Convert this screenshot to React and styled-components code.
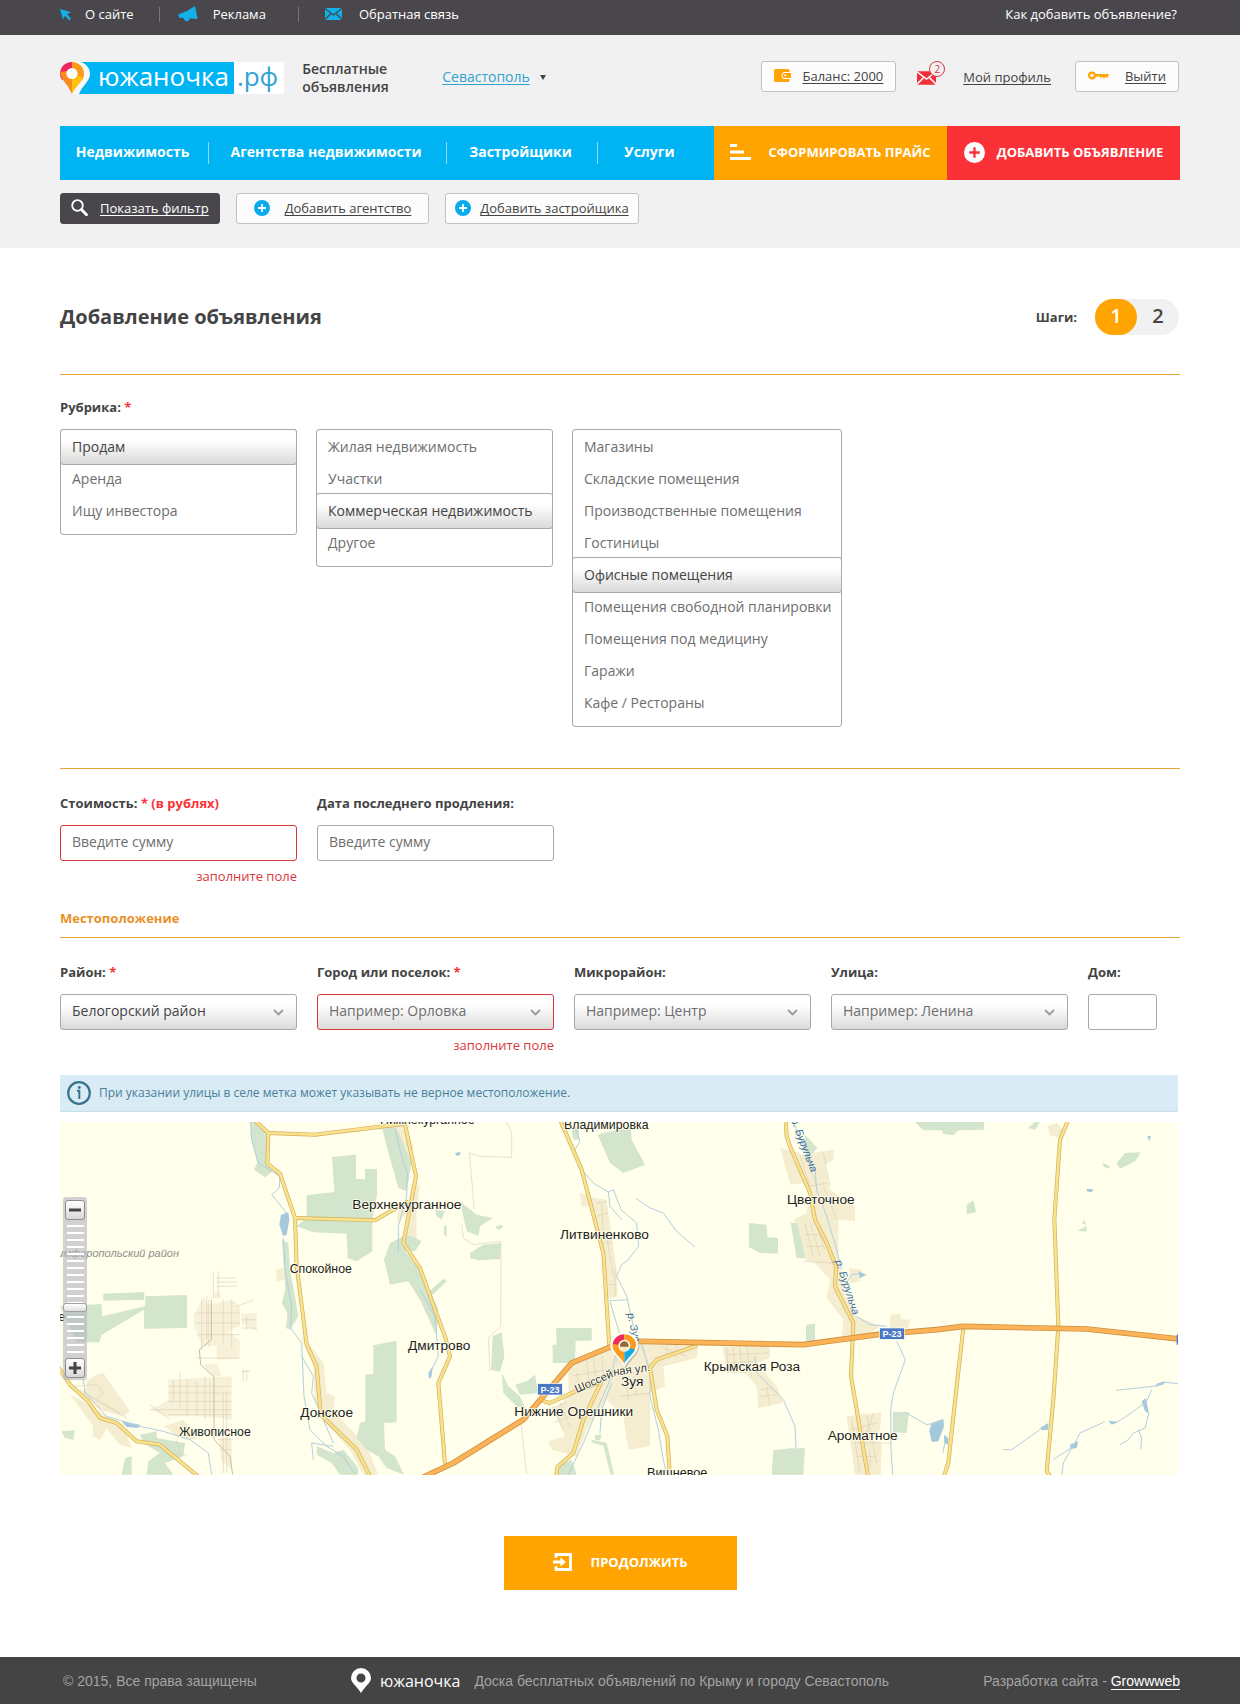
import React, { useState } from "react";
import styled, { createGlobalStyle, css } from "styled-components";

const color = {
  dark: "#4a474c",
  text: "#444444",
  muted: "#6e6e6e",
  blue: "#00b4f3",
  link: "#2fa3d2",
  orange: "#ffa400",
  red: "#fa3237",
  error: "#d9363e",
  rule: "#e3a534",
  border: "#a9a9a9",
  page: "#f1f1f1",
};

const GlobalStyle = createGlobalStyle`
  *, *::before, *::after { box-sizing: border-box; }
  body {
    margin: 0;
    background: #fff;
    color: ${color.text};
    font-family: "Open Sans", "Noto Sans", sans-serif;
    font-size: 13px;
    line-height: 20px;
  }
  button, input, select { font: inherit; color: inherit; }
  a { color: inherit; text-decoration: none; }
  svg { display: block; flex: none; }
`;

/* ---------- shared ---------- */

const Container = styled.div`
  max-width: 1120px;
  margin: 0 auto;
`;

const Gutter = styled.div`
  padding: 0 60px;
  background: ${(p) => p.$bg || "transparent"};
`;

const Underlined = styled.span`
  text-decoration: underline;
  text-decoration-thickness: 1px;
  text-decoration-skip-ink: none;
  text-underline-offset: 2px;
`;

/* ---------- top bar ---------- */

const TopRow = styled(Container)`
  display: flex;
  justify-content: space-between;
  padding: 4px 3px 11px 0;
  color: #fff;
`;

const TopLinks = styled.nav`
  display: flex;
  align-items: center;
`;

const TopLink = styled.a`
  display: flex;
  align-items: center;
  gap: ${(p) => p.$gap}px;
  padding: ${(p) => p.$pad};
  & + & {
    background: linear-gradient(#77757a, #77757a) left center / 1px 15px no-repeat;
  }
`;

/* ---------- header ---------- */

const HeaderRow = styled(Container)`
  display: flex;
  align-items: center;
  padding: 25px 1px 30px 0;
`;

const Logo = styled.a`
  display: flex;
  height: 32px;
  font-size: 26px;
  line-height: 28px;
`;

const LogoName = styled.span`
  padding: 0 5px 0 6px;
  background: ${color.blue};
  color: #fff;
`;

const LogoZone = styled.span`
  padding: 0 6px 0 3px;
  background: #fff;
  color: ${color.link};
`;

const Tagline = styled.p`
  margin: 0 0 0 18px;
  width: 140px;
  font-weight: 600;
  font-size: 14px;
  line-height: 18px;
`;

const CityButton = styled.button`
  display: flex;
  align-items: center;
  gap: 10px;
  padding: 0 0 2px;
  border: 0;
  background: none;
  color: ${color.link};
  font-size: 14px;
  cursor: pointer;
`;

const Caret = styled.span`
  border: 3px solid transparent;
  border-top: 5px solid ${color.text};
  border-bottom: 0;
`;

const Account = styled.div`
  display: flex;
  align-items: center;
  align-self: flex-start;
  margin: 1px 0 0 auto;
`;

const OutlineButton = styled.button`
  display: flex;
  align-items: center;
  gap: ${(p) => p.$gap || 12}px;
  height: 31px;
  padding: 0 ${(p) => p.$pad || 12}px 2px;
  border: 1px solid ${(p) => (p.$dark ? color.dark : "#c2c2c2")};
  border-radius: 3px;
  background: ${(p) => (p.$dark ? color.dark : "#fcfcfc")};
  color: ${(p) => (p.$dark ? "#fff" : color.text)};
  cursor: pointer;
`;

const MailLink = styled.a`
  position: relative;
  margin: 0 18px 0 21px;
  padding: 3px 9px 0 0;
`;

const MailBadge = styled.span`
  position: absolute;
  top: -7px;
  right: 0;
  width: 16px;
  height: 16px;
  border: 1px solid ${color.error};
  border-radius: 8px;
  background: ${color.page};
  color: ${color.error};
  font-size: 10px;
  line-height: 14px;
  text-align: center;
`;

const ProfileLink = styled.a`
  margin-right: 24px;
`;

const MainNav = styled(Container)`
  display: grid;
  grid-template-columns: 654fr 233fr 233fr;
`;

const NavLinks = styled.nav`
  display: grid;
  grid-template-columns: 148fr 238fr 151fr 107fr;
  align-items: center;
  height: 54px;
  padding-right: 10px;
  background: ${color.blue};
  color: #fff;
  font-size: 14px;
  font-weight: 700;
  text-align: center;
`;

const NavLink = styled.a`
  padding: 0 3px 2px 0;
  & + & {
    border-left: 1px solid #8fdcf8;
  }
`;

const SolidButton = styled.button`
  display: flex;
  align-items: center;
  justify-content: center;
  gap: ${(p) => p.$gap || 16}px;
  height: 54px;
  min-width: 233px;
  padding: 0 0 2px;
  border: 0;
  background: ${(p) => p.$bg};
  color: #fff;
  font-weight: 700;
  text-transform: uppercase;
  cursor: pointer;
`;

const QuickActions = styled(Container)`
  display: flex;
  gap: 16px;
  padding: 13px 0 24px;
`;

/* ---------- form ---------- */

const TitleRow = styled.div`
  display: flex;
  align-items: center;
  justify-content: space-between;
  padding: 51px 1px 39px 0;
`;

const Title = styled.h1`
  margin: 0;
  font-size: 20px;
  line-height: 36px;
  font-weight: 700;
`;

const Steps = styled.div`
  display: flex;
  align-items: center;
  gap: 18px;
  font-weight: 700;
`;

const StepPills = styled.ol`
  display: flex;
  margin: 0;
  padding: 0;
  list-style: none;
  border-radius: 18px;
  background: ${color.page};
`;

const Step = styled.li`
  width: 42px;
  height: 36px;
  border-radius: 18px;
  font-size: 20px;
  line-height: 34px;
  font-weight: 600;
  text-align: center;
  ${(p) =>
    p.$active &&
    css`
      background: ${color.orange};
      color: #fff;
    `}
`;

const Rule = styled.hr`
  margin: 0;
  border: 0;
  border-top: 1px solid ${color.rule};
`;

const Caption = styled.div`
  margin-bottom: 12px;
  font-weight: 700;
`;

const Required = styled.span`
  color: ${color.red};
`;

const RubricSection = styled.section`
  padding: 22px 0 41px;
`;

const RubricColumns = styled.div`
  display: grid;
  grid-template-columns: minmax(0, 237px) minmax(0, 237px) minmax(0, 270px);
  align-items: start;
  gap: 19px;
`;

const OptionBox = styled.fieldset`
  min-width: 0;
  margin: 0;
  padding: 1px 0 7px;
  border: 1px solid ${color.border};
  border-radius: 3px;
`;

const HiddenRadio = styled.input`
  position: absolute;
  width: 1px;
  height: 1px;
  margin: 0;
  opacity: 0;
`;

const OptionLabel = styled.label`
  display: block;
  position: relative;
  height: 32px;
  padding: 0 11px;
  font-size: 14px;
  line-height: 32px;
  white-space: nowrap;
  color: ${color.muted};
  cursor: pointer;
  &:has(input:checked) {
    height: 36px;
    margin: -2px -1px;
    border: 1px solid ${color.border};
    border-radius: 3px;
    background: linear-gradient(#fff 30%, #dadada);
    line-height: 34px;
    color: ${color.text};
  }
`;

const FieldGrid = styled.div`
  display: grid;
  grid-template-columns: repeat(4, minmax(0, 237px)) minmax(0, 69px);
  align-items: start;
  gap: 20px;
  padding-top: 24px;
`;

const FieldLabel = styled.label`
  display: block;
  margin-bottom: 12px;
  font-weight: 700;
`;

const controlStyle = css`
  display: block;
  width: 100%;
  height: 36px;
  padding: 0 11px 2px;
  border: 1px solid ${(p) => (p.$invalid ? color.error : color.border)};
  border-radius: 3px;
  font-size: 14px;
  outline: none;
`;

const TextInput = styled.input`
  ${controlStyle}
  padding-bottom: 4px;
  background: #fff;
  &::placeholder {
    color: ${color.muted};
    opacity: 1;
  }
`;

const SelectWrap = styled.div`
  position: relative;
  svg {
    position: absolute;
    top: 15px;
    right: 13px;
    pointer-events: none;
  }
`;

const Select = styled.select`
  ${controlStyle}
  appearance: none;
  background: linear-gradient(#fff 30%, #dadada);
  color: ${(p) => (p.$empty ? color.muted : color.text)};
`;

const ErrorText = styled.p`
  margin: 6px 0 0;
  line-height: 18px;
  text-align: right;
  color: ${color.error};
`;

const SubTitle = styled.h2`
  margin: 23px 0 9px;
  font-size: 13px;
  line-height: 20px;
  font-weight: 700;
  color: #e8912a;
`;

const LocationPanel = styled.div`
  padding: 21px 2px 0 0;
`;

const InfoBar = styled.p`
  display: flex;
  align-items: center;
  gap: 8px;
  height: 37px;
  margin: 0 0 10px;
  padding: 0 7px;
  border-bottom: 1px solid #c5e0ea;
  background: #d9ebf5;
  color: #4a7f99;
  font-size: 12px;
`;

const SubmitRow = styled.div`
  display: flex;
  justify-content: center;
  padding: 61px 0 67px;
`;

/* ---------- map ---------- */

const MapFrame = styled.div`
  position: relative;
  background: #ffffec;
`;

const MapSvg = styled.svg`
  width: 100%;
  height: auto;
  font-family: "Liberation Sans", Arial, sans-serif;
`;

const ZoomPanel = styled.div`
  position: absolute;
  top: 75px;
  left: 3px;
  display: flex;
  flex-direction: column;
  align-items: center;
  justify-content: space-between;
  width: 24px;
  height: 183px;
  padding: 3px 0 2px;
  border-radius: 3px;
  background: rgba(178, 180, 190, 0.6);
`;

const ZoomButton = styled.button`
  display: flex;
  align-items: center;
  justify-content: center;
  width: 20px;
  height: 20px;
  padding: 0;
  border: 1px solid #8d8d8d;
  border-radius: 3px;
  background: linear-gradient(#fff, #d8d8d8);
`;

const ZoomSlider = styled.input`
  appearance: none;
  writing-mode: vertical-lr;
  width: 24px;
  height: 134px;
  margin: 0;
  background: repeating-linear-gradient(transparent 0 3px, #fff 3px 5px, transparent 5px 7px) center /
    17px 100% no-repeat;
  &::-webkit-slider-thumb {
    appearance: none;
    width: 24px;
    height: 9px;
    border: 1px solid #a0a0a0;
    border-radius: 3px;
    background: linear-gradient(#fff, #dedede);
  }
`;

/* ---------- footer ---------- */

const FooterRow = styled(Container)`
  display: flex;
  align-items: center;
  justify-content: space-between;
  height: 47px;
  padding: 0 0 0 3px;
  color: #a3a3a3;
  font-family: "Liberation Sans", Arial, sans-serif;
  font-size: 14px;
`;

const FooterBrand = styled.div`
  display: flex;
  align-items: center;
`;

const FooterName = styled.a`
  margin: 0 14px 0 9px;
  color: #fff;
  font-family: "Open Sans", "Noto Sans", sans-serif;
  font-size: 16px;
`;

const FooterLink = styled.a`
  border-bottom: 1px solid #fff;
  color: #fff;
`;

/* ---------- icons ---------- */

const CursorIcon = () => (
  <svg width="12" height="13" viewBox="0 0 12 13" fill="#12b1ea">
    <path d="M0 1l11 3.2-4 1.8 4 4.8-1.8 1.6-4.2-4.6-2 3.8z" />
  </svg>
);

const MegaphoneIcon = () => (
  <svg width="20" height="16" viewBox="0 0 20 16" fill="#12b1ea">
    <path d="M17 0l2.6 13L12 12.2c-.6 2-2 3.2-3.8 2.900-1.500-.2-2.400-1.400-2.800-3.300L1.500 12 0 8.500 9 5z" />
  </svg>
);

const MailIcon = ({ fill, line, width, height }) => (
  <svg width={width} height={height} viewBox="0 0 17 12">
    <rect width="17" height="12" rx="1" fill={fill} />
    <path d="M0 .5l8.500 6.500L17 .5M0 11.500l6-6M17 11.500l-6-6" fill="none" stroke={line} strokeWidth="1.300" />
  </svg>
);

const WalletIcon = () => (
  <svg width="17" height="13" viewBox="0 0 17 13">
    <path d="M1.500 0H14a1.500 1.500 0 011.500 1.500V3H11a3.500 3.500 0 000 7h4.500v1.500A1.500 1.500 0 0114 13H1.500A1.500 1.500 0 010 11.500v-10A1.500 1.500 0 011.500 0z" fill={color.orange} />
    <path d="M11 4h6v5h-6a2.500 2.500 0 010-5z" fill={color.orange} />
    <circle cx="11.300" cy="6.500" r="1" fill="#fff" />
  </svg>
);

const KeyIcon = () => (
  <svg width="21" height="9" viewBox="0 0 21 9">
    <circle cx="4" cy="4.500" r="2.900" fill="none" stroke={color.orange} strokeWidth="2.200" />
    <path d="M8 3h12.500v2.200L19 7l-1.500-1.500L16 8l-1.500-2.500L13 7.500l-1.500-2H8z" fill={color.orange} />
  </svg>
);

const PriceIcon = () => (
  <svg width="22" height="16" viewBox="0 0 22 16" fill="#fff">
    <path d="M0 0h7v3H0zM0 6.500h14v3H0zM0 13h21v3H0z" />
  </svg>
);

const PlusCircle = ({ size, fill, cross }) => (
  <svg width={size} height={size} viewBox="0 0 20 20">
    <circle cx="10" cy="10" r="10" fill={fill} />
    <path d="M10 5v10M5 10h10" stroke={cross} strokeWidth="2.200" />
  </svg>
);

const SearchIcon = () => (
  <svg width="17" height="17" viewBox="0 0 17 17" fill="none" stroke="#fff">
    <circle cx="6.500" cy="6.500" r="5.300" strokeWidth="1.800" />
    <path d="M10.500 10.500L15.500 15.800" strokeWidth="2.800" strokeLinecap="round" />
  </svg>
);

const ChevronIcon = () => (
  <svg width="11" height="7" viewBox="0 0 11 7" fill="none" stroke="#999" strokeWidth="1.800">
    <path d="M1 1l4.500 4.500L10 1" />
  </svg>
);

const InfoIcon = () => (
  <svg width="24" height="24" viewBox="0 0 24 24">
    <circle cx="12" cy="12" r="10.800" fill="none" stroke="#38738f" strokeWidth="2.200" />
    <path d="M10 9.800h2.300v8.200" fill="none" stroke="#38738f" strokeWidth="2" />
    <circle cx="12.300" cy="6.500" r="1.400" fill="#38738f" />
  </svg>
);

const EnterIcon = () => (
  <svg width="19" height="18" viewBox="0 0 19 18">
    <path d="M3 5V1.500h14.500v15H3V13" fill="none" stroke="#fff" strokeWidth="2.800" />
    <path d="M0 7.500h7.500V4.500L13 9l-5.500 4.500v-3H0z" fill="#fff" />
  </svg>
);

const FooterPin = () => (
  <svg width="20" height="25" viewBox="0 0 20 25" fill="#fff">
    <path fillRule="evenodd" d="M10 0a10 10 0 0110 10c0 4.500-5.500 8-10 15C5.500 18 0 14.500 0 10A10 10 0 0110 0zm0 5.500a4.500 4.500 0 100 9 4.500 4.500 0 000-9z" />
  </svg>
);

const LogoPin = () => (
  <svg width="32" height="32" viewBox="0 0 32 32">
    <path d="M14 0h18v32H14z" fill={color.blue} />
    <path d="M12 0h8c6 1 10 6 10 12 0 7-8 12-11 20h-7z" fill="#f8f8f8" />
    <path d="M12 0H0v32h14z" fill={color.page} />
    <path d="M12 0C5 0 0 5 0 12c0 2 .7 4 2 6l10-6z" fill="#ef2460" />
    <path d="M.2 10C0 17 8 22 12 32V12L6.500 9z" fill="#f98a1e" />
    <path d="M12 0c7 0 12 5 12 12 0 2-.6 4-1.600 6L12 12z" fill="#fb9a17" />
    <path d="M12 32V12l11.500 3.500C21 21 15 25 12 32z" fill="#ffc20e" />
    <circle cx="12" cy="11.500" r="5.600" fill="#fff" />
  </svg>
);

/* ---------- map data: three tiles, each placed at its own x offset ---------- */

const GREEN = [
  [0, "602,37 622,37 656,75 650,160 668,185 645,203 612,180 622,160 602,80"],
  [0, "846,142 918,135 918,208 945,208 945,178 981,178 981,255 967,330 967,425 920,455 893,445 890,372 790,368 740,350 770,325 770,257 853,247"],
  [0, "995,50 1040,55 1085,160 1070,245 1045,235 1010,110"],
  [0, "1020,400 1060,380 1085,380 1115,395 1095,425 1065,425 1110,480 1165,600 1160,680 1110,570 1075,515 1020,525 1002,450"],
  [0, "696,390 715,400 720,480 735,560 745,620 720,660 708,655 712,610 695,580 706,540"],
  [0, "160,552 283,547 283,570 160,573"],
  [0, "287,560 411,556 411,655 282,657 282,600 155,675 148,698 80,698 30,590 155,583 156,620 285,590"],
  [0, "970,707 1040,693 1040,938 1002,940 1005,1020 1035,1040 1062,1095 1010,1075 985,1040 950,1020 920,985 930,940 946,935 946,795 970,793"],
  [0, "35,965 75,962 70,990 45,985"],
  [0, "225,1045 245,1040 245,1095 215,1095"],
  [0, "270,975 320,965 320,985 405,1000 400,1040 345,1060 370,1095 290,1095 295,1055 330,1030 280,1000"],
  [0, "800,1010 850,1030 880,1020 925,1075 925,1095 870,1095 845,1060 800,1035"],
  [1110, "533,75 632,50 635,90 675,165 610,190 570,160"],
  [1110, "120,275 170,315 218,325 180,350 175,378 140,365"],
  [1110, "225,352 240,345 250,350 238,362"],
  [1110, "150,430 190,405 243,400 240,448 175,452 150,445"],
  [1110, "45,300 75,305 65,330 50,320"],
  [1110, "72,345 80,350 80,380 72,375"],
  [1110, "70,507 80,515 35,558 28,545"],
  [1110, "408,655 515,655 515,693 467,693 465,760 398,760 398,705 410,705"],
  [1110, "218,680 245,668 253,740 240,787 213,780"],
  [1110, "285,825 320,815 345,795 355,850 300,855"],
  [1110, "245,790 265,830 300,860 315,895 290,890 250,850"],
  [1110, "987,340 1040,345 1042,383 1074,385 1074,432 1020,430 987,412"],
  [1110, "1060,1022 1110,1016 1155,1016 1150,1095 1055,1095"],
  [1110, "415,1065 455,1050 470,1095 410,1095"],
  [1110, "525,975 545,975 540,992 525,990"],
  [1110, "515,990 560,1000 582,1095 572,1095 550,1008 515,998"],
  [1110, "455,60 478,50 476,90 460,90"],
  [2220, "2,340 22,340 46,446 20,446"],
  [2220, "375,37 582,37 582,60 505,62 490,77 460,72 455,62 400,62"],
  [2220, "48,645 75,642 75,695 48,697"],
  [2220, "308,906 357,908 350,970 308,968"],
  [2220, "530,285 550,272 558,308 530,314"],
  [2220, "980,160 1005,130 1052,128 1035,155 990,177"],
  [2220, "938,160 960,170 955,177 940,170"],
  [2220, "862,363 890,348 890,366"],
  [2220, "875,340 885,330 888,345"],
  [2220, "715,55 735,37 750,37 735,60"],
  [2220, "45,75 82,115 60,140 40,120"],
];

const SAND = [
  [0, "140,795 160,790 240,905 220,920 150,900 100,850 115,810"],
  [0, "60,855 110,880 170,920 220,945 245,1015 210,1005 170,955 150,990 128,980 130,950"],
  [0, "752,680 775,700 820,760 830,850 855,860 850,905 950,1010 985,1095 940,1095 900,1020 820,935 795,870 790,770"],
  [0, "678,480 700,475 703,510 680,515"],
  [0, "1085,225 1110,225 1100,300 1100,410 1060,410 1070,310 1040,340 1045,300 1075,280"],
  [0, "345,950 400,930 440,990 385,985"],
  [0, "985,60 1065,40 1090,110 1080,160 1030,60"],
  [1110, "480,250 525,265 560,270 570,345 590,480 593,562 565,567 555,440 530,360 512,290 485,290"],
  [1110, "445,770 570,720 660,705 835,705 830,745 730,770 735,830 690,850 690,1010 625,1020 610,920 560,870 500,960 470,1040 395,1020 385,995 435,980 400,900 445,860"],
  [1110, "908,712 1050,705 1050,745 1010,760 1070,830 1090,880 1015,895 1010,830 975,790 920,790"],
  [1110, "1080,115 1140,130 1155,200 1110,220"],
  [2220, "0,140 100,125 133,120 130,150 105,165 120,240 195,290 195,335 145,330 145,440 165,560 200,620 270,650 240,670 155,680 160,630 110,565 120,510 75,460 45,450 12,330 50,310 60,250 40,220 0,225"],
  [2220, "302,615 330,612 332,628 360,630 355,655 300,655"],
  [2220, "170,920 275,908 270,960 245,990 275,1000 272,1095 195,1095 180,990"],
  [2220, "772,50 800,40 820,60 805,85 780,75"],
  [2220, "178,475 215,480 210,515 180,520"],
];

const PALE_SAND = [
  [0, "490,548 512,548 512,565 490,565"],
  [0, "437,608 460,560 475,585 545,570 570,590 570,650 535,665 570,695 568,748 500,750 500,710 455,710 440,660"],
  [0, "573,612 620,610 620,665 575,640"],
  [0, "460,765 500,760 515,800 490,800"],
  [0, "355,810 545,800 545,930 510,925 440,920 355,920 300,900 355,870"],
  [0, "508,985 545,985 545,1080 512,1050"],
];

const WATER_AREAS = [
  [0, "693,315 715,308 718,330 710,375 700,380 688,345"],
  [0, "215,935 270,945 265,955 230,952"],
  [1110, "105,130 122,127 118,138 108,137"],
  [1110, "25,790 38,770 35,800 28,808"],
  [2220, "425,940 460,928 462,950 445,995 425,997 418,965"],
  [2220, "462,975 475,985 474,1005 463,1000"],
  [2220, "205,485 230,495 210,505"],
  [2220, "890,238 910,238 905,248 890,245"],
  [2220, "1055,875 1068,865 1077,912 1065,905"],
  [2220, "840,1005 865,995 860,1015 842,1018"],
  [2220, "955,933 985,937 965,945"],
  [2220, "750,955 775,940 775,960 755,962"],
  [2220, "1100,822 1125,814 1122,824 1095,832"],
  [2220, "1072,80 1083,78 1078,95"],
];

const RIVERS = [
  [0, "M602,37L605,90L625,160L690,200L688,235L665,255L710,310M700,385L705,480L725,590L722,655L755,700L762,860L780,960L830,1010L880,1040L915,1095"],
  [0, "M1035,60L1055,140L1072,190L1070,260L1045,350L1045,430M755,740L790,800L785,850L820,930L850,1000"],
  [0, "M100,810L105,850L170,920L270,950L340,965L420,990L475,1030L485,1095M790,1050L785,1000L850,1010"],
  [1110, "M485,180L520,220L565,247L580,240L603,300L650,340L656,410L625,450L605,465L590,500L620,560L640,650M565,247L570,290L605,330M570,573L625,570M570,575L598,670L575,800L540,880L490,1000L445,1095"],
  [1110, "M575,820L545,900L540,970M665,700L690,790L690,860L715,960L730,1050L740,1095M648,266L690,295L730,310L770,365L825,412M0,540L45,620L55,740L30,790"],
  [1110, "M465,50L480,95L465,120M1005,740L1010,790L1090,870L1125,950L1128,1016"],
  [2220, "M10,37L50,130L75,180L80,240L110,320L140,420L155,480M200,620L240,645L290,650M320,695L346,750L310,850L302,900L303,1020L308,1095M345,908L410,945L460,935M170,520L185,495L210,492"],
  [2220, "M978,842L1090,830L1125,818L1165,822M1085,840L1070,875L1010,920L975,940M945,936L870,970L850,1010L790,1050M1077,910L1065,955L1030,970L1015,990L990,1005M1045,960L1055,985L1052,1020M845,1015L820,1060L815,1095M750,960L665,1020L640,1020M465,1000L458,1030"],
];

const TRACKS = [
  [0, "M475,570V710M490,490V565M505,485V560M500,505H560M500,517H560M500,530H560M440,610H570M440,640H570M440,675H570M440,745H570M470,560V690M520,570V700M545,570V720M455,570V720M435,610V660M575,630H620M575,655H620M590,620V660M575,785H600M560,590L600,575L610,568"],
  [0, "M355,830H545M355,850H545M355,875H545M300,900H545M355,915H545M370,810V880M390,785V890M412,810V920M440,815V920M465,800V930M520,850V1090M530,850V1090M500,990H545M510,1020H545M480,815V920M360,930L300,885"],
  [0, "M75,830L140,825L160,850L130,880M90,840L210,910M100,850L230,925M380,990L390,1040M360,1035H410M580,780V815M590,780V815"],
  [1110, "M148,130L180,140L275,143L275,70L260,37M148,130L163,300M125,345L130,385L160,405L243,395L242,650L205,685L210,785M303,940L320,1095"],
  [1110, "M530,280L560,275M530,320L565,310M545,280L550,370M560,380L580,500M550,400H580M565,525H590M585,470V560M470,790L480,850M500,750L510,840M520,740L530,830M545,735L550,800M450,800L560,780M720,710L800,740M740,705V745M770,705V740M600,860L690,850M640,800L650,860M620,820L625,870M400,890L430,960M420,880L450,950M380,900L440,880M400,940L450,920"],
  [1110, "M920,715L925,790M940,712L945,790M960,710L965,790M980,710L990,790M915,735L1045,730M920,760L1000,755M1020,840L1060,835M1020,860L1070,855M1040,830L1050,890M1025,690V720M660,700L700,800M590,700V760"],
  [2220, "M30,140L60,230M50,135L80,230M100,130L120,230M60,230L110,220M45,340L70,440M60,335L90,440M80,350L105,420M45,375L100,375M50,410L100,410M100,230L140,330M40,455L130,460M185,930L210,1090M230,915L260,1060M250,910L220,1000M180,960L260,940M190,1000L305,1000M200,1040L255,1040M240,1020V1075"],
];

const MAIN_TRACK = "M484,570V690L448,720L452,765L492,802V990L540,1040L548,1095";

const ROADS = [
  [0, "M612,30L655,70L652,162L690,192L735,325L740,470L770,705L800,770L812,915L920,1020L965,1110"],
  [0, "M655,70L795,75L1065,42"],
  [0, "M1062,30L1098,200L1060,400L1110,475L1155,600L1185,680L1200,740L1165,820L1185,1062"],
  [0, "M735,325L975,332L1030,300L1075,275"],
  [0, "M20,765L60,825L115,875L150,925L200,940L260,995L330,1005L450,1105"],
  [1110, "M420,30L485,180L550,430L568,710"],
  [1110, "M365,873L390,880L460,848L545,815L490,930L460,1030L412,1072L408,1105"],
  [1110, "M830,708L710,750L690,775L710,900L742,980L750,1105"],
  [2220, "M-13,30L-10,80L0,110L60,250L75,330L110,400L138,470L135,530L190,640L183,800L235,1105"],
  [2220, "M520,655L500,830L475,1060L460,1105"],
  [2220, "M835,30L810,90L793,330L805,650L790,870L770,1085L785,1105"],
];

const HIGHWAY =
  "M1115,1105L1210,1060L1420,930L1565,760L1680,712L1770,695L2260,705L2480,675L2660,660L2740,650L3110,658L3390,688";

const PLACES = [
  [990, 43, "Нижнекурганное", 37],
  [907, 299, "Верхнекурганное", 41],
  [719, 491, "Спокойное", 37],
  [1074, 720, "Дмитрово", 41],
  [751, 922, "Донское", 41],
  [387, 980, "Живописное", 37],
  [1542, 58, "Владимировка", 37],
  [1530, 387, "Литвиненково", 41],
  [1961, 784, "Крымская Роза", 41],
  [1713, 830, "Зуя", 41],
  [1393, 918, "Нижние Орешники", 41],
  [1791, 1101, "Вишневое", 38],
  [2211, 284, "Цветочное", 41],
  [2333, 992, "Ароматное", 41],
  [25, 634, "е", 37],
];

function Polygons({ items, fill }) {
  return (
    <g fill={fill}>
      {items.map(([x, points]) => (
        <polygon key={x + points} points={points} transform={`translate(${x} 0)`} />
      ))}
    </g>
  );
}

function Lines({ items, stroke, width }) {
  return (
    <g fill="none" stroke={stroke} strokeWidth={width} strokeLinejoin="round">
      {items.map(([x, d]) => (
        <path key={x + d} d={d} transform={`translate(${x} 0)`} />
      ))}
    </g>
  );
}

function RoadSign({ x, y }) {
  return (
    <g>
      <rect x={x} y={y} width="74" height="34" fill="#4a78c4" stroke="#fff" strokeWidth="2" />
      <text x={x + 37} y={y + 27} fill="#fff" fontSize="27" fontWeight="700" textAnchor="middle">
        Р-23
      </text>
    </g>
  );
}

function LocationMap() {
  const [zoom, setZoom] = useState(65);
  return (
    <MapFrame>
      <MapSvg viewBox="30 37 3354 1059" role="img" aria-label="Карта">
        <Polygons items={PALE_SAND} fill="#f8f1d9" />
        <Polygons items={SAND} fill="#f5edd0" />
        <Polygons items={GREEN} fill="#d3e5cc" />
        <Lines items={TRACKS} stroke="#ddd2b6" width="2" />
        <Lines items={[[0, MAIN_TRACK]]} stroke="#c9bf9d" width="3" />
        <Polygons items={WATER_AREAS} fill="#a5c8dc" />
        <Lines items={RIVERS} stroke="#b3cfdd" width="3" />
        <Lines items={ROADS} stroke="#d0ae5e" width="12" />
        <Lines items={ROADS} stroke="#fae28c" width="8" />
        <Lines items={[[0, HIGHWAY]]} stroke="#cf9040" width="17" />
        <Lines items={[[0, HIGHWAY]]} stroke="#fcb358" width="12" />
        <g paintOrder="stroke" stroke="#ffffee" strokeWidth="5" strokeLinejoin="round" fill="#222">
          {PLACES.map(([x, y, name, size]) => (
            <text key={name} x={x} y={y} fontSize={size}>
              {name}
            </text>
          ))}
          <text x="387" y="441" fontSize="33" fontStyle="italic" textAnchor="end" fill="#8f8f88">
            Симферопольский район
          </text>
          <path id="street" d="M1580,850L1700,797L1830,780" fill="none" stroke="none" />
          <text fontSize="34" fill="#333">
            <textPath href="#street">Шоссейная ул.</textPath>
          </text>
        </g>
        <g fill="#3d6f9c" fontSize="32" fontStyle="italic">
          <text transform="translate(2222 30) rotate(69)">р. Бурульча</text>
          <text transform="translate(2356 455) rotate(72)">р. Бурульча</text>
          <text transform="translate(1732 612) rotate(78)">р. Зуя</text>
        </g>
        <RoadSign x={1463} y={822} />
        <RoadSign x={2489} y={655} />
        <rect x="3380" y="675" width="10" height="30" fill="#4a78c4" />
        <g transform="translate(1723 708)">
          <path d="M1,66C-12,38 -42,24 -42,-2A42,38 0 0142,-2C42,24 14,38 1,66z" fill="#888" opacity=".45" transform="translate(3 3)" />
          <path d="M0,64C-12,38 -42,24 -42,-2A42,38 0 0142,-2C42,24 12,38 0,64z" fill="#fff" />
          <path d="M0,0V-34A35,32 0 00-35,0L-32,12z" fill="#ef2b5a" />
          <path d="M0,0L-35,-6C-38,20 -10,34 0,54z" fill="#fb9a1c" />
          <path d="M0,0V-34A35,32 0 0135,0L30,14z" fill="#fb9a1c" />
          <path d="M0,0L32,12C24,28 8,38 0,54z" fill="#1ba9e1" />
          <circle r="18" fill="#fff" />
          <circle r="13" fill="#8f6b3a" />
          <path d="M-13,3A13,13 0 0013,3z" fill="#fbe9b7" />
        </g>
      </MapSvg>
      <ZoomPanel>
        <ZoomButton type="button" aria-label="Отдалить">
          <svg width="14" height="14" viewBox="0 0 14 14">
            <path d="M1 7h12" stroke="#444" strokeWidth="3" />
          </svg>
        </ZoomButton>
        <ZoomSlider
          type="range"
          aria-label="Масштаб"
          value={zoom}
          onChange={(e) => setZoom(Number(e.target.value))}
        />
        <ZoomButton type="button" aria-label="Приблизить">
          <svg width="14" height="14" viewBox="0 0 14 14">
            <path d="M1 7h12M7 1v12" stroke="#444" strokeWidth="3" />
          </svg>
        </ZoomButton>
      </ZoomPanel>
    </MapFrame>
  );
}

/* ---------- form parts ---------- */

const RUBRICS = [
  { name: "deal", legend: "Тип сделки", checked: 0, options: ["Продам", "Аренда", "Ищу инвестора"] },
  {
    name: "kind",
    legend: "Вид недвижимости",
    checked: 2,
    options: ["Жилая недвижимость", "Участки", "Коммерческая недвижимость", "Другое"],
  },
  {
    name: "premises",
    legend: "Помещение",
    checked: 4,
    options: [
      "Магазины",
      "Складские помещения",
      "Производственные помещения",
      "Гостиницы",
      "Офисные помещения",
      "Помещения свободной планировки",
      "Помещения под медицину",
      "Гаражи",
      "Кафе / Рестораны",
    ],
  },
];

function OptionList({ name, legend, options, checked }) {
  return (
    <OptionBox aria-label={legend}>
      {options.map((option, i) => (
        <OptionLabel key={option}>
          <HiddenRadio type="radio" name={name} defaultChecked={i === checked} />
          {option}
        </OptionLabel>
      ))}
    </OptionBox>
  );
}

function Field({ id, label, mark, error, children }) {
  return (
    <div>
      <FieldLabel htmlFor={id}>
        {label} {mark && <Required>{mark}</Required>}
      </FieldLabel>
      {children}
      {error && <ErrorText>{error}</ErrorText>}
    </div>
  );
}

function SelectField({ id, label, mark, error, value, empty }) {
  return (
    <Field id={id} label={label} mark={mark} error={error}>
      <SelectWrap>
        <Select id={id} $empty={empty} $invalid={Boolean(error)}>
          <option>{value}</option>
        </Select>
        <ChevronIcon />
      </SelectWrap>
    </Field>
  );
}

export default function App() {
  return (
    <>
      <GlobalStyle />
      <Gutter $bg={color.dark}>
        <TopRow>
          <TopLinks>
            <TopLink href="#about" $gap={13} $pad="0 25px 0 0">
              <CursorIcon />О сайте
            </TopLink>
            <TopLink href="#ads" $gap={15} $pad="0 32px 0 19px">
              <MegaphoneIcon />
              Реклама
            </TopLink>
            <TopLink href="#feedback" $gap={17} $pad="0 0 0 27px">
              <MailIcon fill="#12b1ea" line={color.dark} width={17} height={12} />
              Обратная связь
            </TopLink>
          </TopLinks>
          <a href="#how">Как добавить объявление?</a>
        </TopRow>
      </Gutter>

      <Gutter as="header" $bg={color.page}>
        <HeaderRow>
          <Logo href="#home">
            <LogoPin />
            <LogoName>южаночка</LogoName>
            <LogoZone>.рф</LogoZone>
          </Logo>
          <Tagline>
            Бесплатные
            <br />
            объявления
          </Tagline>
          <CityButton type="button">
            <Underlined>Севастополь</Underlined>
            <Caret />
          </CityButton>
          <Account>
            <OutlineButton type="button" $gap={11}>
              <WalletIcon />
              <Underlined>Баланс: 2000</Underlined>
            </OutlineButton>
            <MailLink href="#mail">
              <MailIcon fill="#ef3038" line="#fff" width={19} height={14} />
              <MailBadge>2</MailBadge>
            </MailLink>
            <ProfileLink href="#profile">
              <Underlined>Мой профиль</Underlined>
            </ProfileLink>
            <OutlineButton type="button" $gap={16}>
              <KeyIcon />
              <Underlined>Выйти</Underlined>
            </OutlineButton>
          </Account>
        </HeaderRow>
        <MainNav>
          <NavLinks>
            <NavLink href="#realty">Недвижимость</NavLink>
            <NavLink href="#agencies">Агентства недвижимости</NavLink>
            <NavLink href="#developers">Застройщики</NavLink>
            <NavLink href="#services">Услуги</NavLink>
          </NavLinks>
          <SolidButton type="button" $bg={color.orange}>
            <PriceIcon />
            Сформировать прайс
          </SolidButton>
          <SolidButton type="button" $bg={color.red} $gap={12}>
            <PlusCircle size={21} fill="#fff" cross={color.red} />
            Добавить объявление
          </SolidButton>
        </MainNav>
        <QuickActions>
          <OutlineButton type="button" $dark $pad={10}>
            <SearchIcon />
            <Underlined>Показать фильтр</Underlined>
          </OutlineButton>
          <OutlineButton type="button" $pad={17} $gap={15}>
            <PlusCircle size={16} fill="#08acec" cross="#fff" />
            <Underlined>Добавить агентство</Underlined>
          </OutlineButton>
          <OutlineButton type="button" $pad={9} $gap={9}>
            <PlusCircle size={16} fill="#08acec" cross="#fff" />
            <Underlined>Добавить застройщика</Underlined>
          </OutlineButton>
        </QuickActions>
      </Gutter>

      <Gutter as="main">
        <Container as="form">
          <TitleRow>
            <Title>Добавление объявления</Title>
            <Steps>
              Шаги:
              <StepPills>
                <Step $active>1</Step>
                <Step>2</Step>
              </StepPills>
            </Steps>
          </TitleRow>
          <Rule />
          <RubricSection>
            <Caption>
              Рубрика: <Required>*</Required>
            </Caption>
            <RubricColumns>
              {RUBRICS.map((rubric) => (
                <OptionList key={rubric.name} {...rubric} />
              ))}
            </RubricColumns>
          </RubricSection>
          <Rule />
          <FieldGrid>
            <Field id="price" label="Стоимость:" mark="* (в рублях)" error="заполните поле">
              <TextInput id="price" placeholder="Введите сумму" $invalid />
            </Field>
            <Field id="date" label="Дата последнего продления:">
              <TextInput id="date" placeholder="Введите сумму" />
            </Field>
          </FieldGrid>
          <SubTitle>Местоположение</SubTitle>
          <Rule />
          <FieldGrid>
            <SelectField id="district" label="Район:" mark="*" value="Белогорский район" />
            <SelectField
              id="town"
              label="Город или поселок:"
              mark="*"
              value="Например: Орловка"
              error="заполните поле"
              empty
            />
            <SelectField id="area" label="Микрорайон:" value="Например: Центр" empty />
            <SelectField id="street-name" label="Улица:" value="Например: Ленина" empty />
            <Field id="house" label="Дом:">
              <TextInput id="house" />
            </Field>
          </FieldGrid>
          <LocationPanel>
            <InfoBar>
              <InfoIcon />
              При указании улицы в селе метка может указывать не верное местоположение.
            </InfoBar>
            <LocationMap />
          </LocationPanel>
          <SubmitRow>
            <SolidButton type="submit" $bg={color.orange} $gap={19}>
              <EnterIcon />
              Продолжить
            </SolidButton>
          </SubmitRow>
        </Container>
      </Gutter>

      <Gutter as="footer" $bg="#444444">
        <FooterRow>
          <span>© 2015, Все права защищены</span>
          <FooterBrand>
            <FooterPin />
            <FooterName href="#home">южаночка</FooterName>
            Доска бесплатных объявлений по Крыму и городу Севастополь
          </FooterBrand>
          <span>
            Разработка сайта - <FooterLink href="#growwweb">Growwweb</FooterLink>
          </span>
        </FooterRow>
      </Gutter>
    </>
  );
}
